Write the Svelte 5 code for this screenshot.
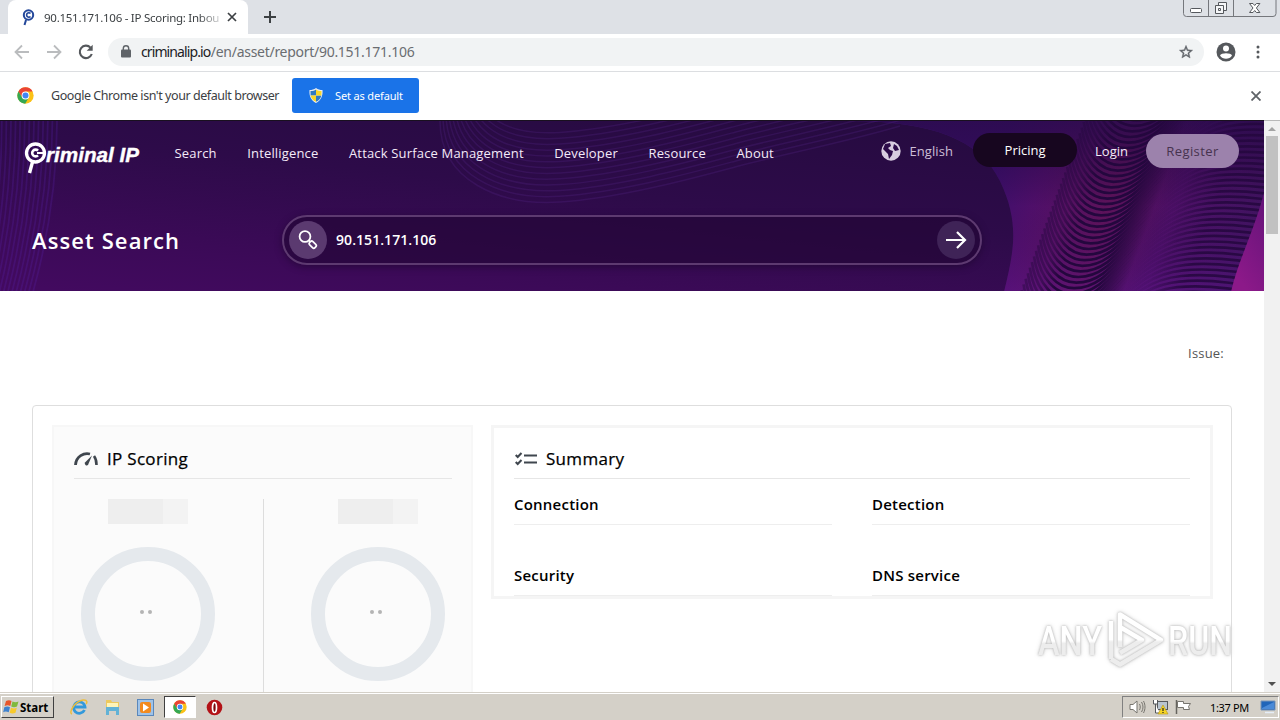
<script>
  const nav = ['Search', 'Intelligence', 'Attack Surface Management', 'Developer', 'Resource', 'About'];
  const waves = Array.from({ length: 64 }, (_, i) => {
    const y = i * 5.6 - 40;
    const x = 1100 - y * 0.37;
    return `M${x} ${y - 43}C${x + 4} ${y - 14} ${x + 20} ${y} ${x + 36} ${y}C${x + 58} ${y} ${x + 70} ${y - 14} ${x + 95} ${y - 40}C${x + 122} ${y - 68} ${x + 140} ${y - 82} ${x + 170} ${y - 85}S${x + 230} ${y - 84} ${x + 300} ${y - 70}`;
  });
  const arcs = Array.from({ length: 13 }, (_, i) => {
    const y = -i * 5.8;
    return `M${440 + i * 3} ${y}C${440 + i * 2} ${60 + y} 500 ${85 + y} 560 ${81 + y}S690 ${58 + y} 735 ${46 + y}S850 ${20 + y} 900 ${5 + y}`;
  });
  const slants = Array.from({ length: 16 }, (_, i) => `M${i * 4.6 - 12} 0C${i * 4.6 - 12} 50 ${i * 4.4 - 16} 110 ${i * 4.2 - 30} 171`);
  const groups = [['Connection', 'Detection'], ['Security', 'DNS service']];
</script>

{#snippet chrome(size)}
  <svg width={size} height={size} viewBox="0 0 48 48">
    <circle cx="24" cy="24" r="23" fill="#fbc116" />
    <path d="M4 12.5A23 23 0 0 1 44 12.5L24 13 14 29Z" fill="#ea4335" />
    <path d="M4 12.5A23 23 0 0 0 23 47L33 30H15Z" fill="#34a853" />
    <circle cx="24" cy="24" r="11" fill="#fff" />
    <circle cx="24" cy="24" r="8.5" fill="#4285f4" />
  </svg>
{/snippet}

<div class="screen">
  <div class="tabstrip">
    <div class="tab">
      <svg class="fav" width="14" height="17" viewBox="0 0 14 17" fill="none" stroke="#23479a"><circle cx="7.5" cy="6" r="4.7" stroke-width="2" /><path d="M9.5 4.6A2.2 2.2 0 1 0 9.5 7.4" stroke-width="1.6" /><path d="M5 11L3.5 16" stroke-width="2" /></svg>
      <span class="tabtitle">90.151.171.106 - IP Scoring: Inbou</span>
      <svg width="10" height="10" viewBox="0 0 10 10" stroke="#3c4043" stroke-width="1.7"><path d="M1 1l8 8M9 1L1 9" /></svg>
    </div>
    <svg class="plus" width="12" height="12" viewBox="0 0 12 12" stroke="#3c4043" stroke-width="2"><path d="M6 0v12M0 6h12" /></svg>
    <svg class="winctl" width="94" height="18" viewBox="0 0 94 18" fill="none" stroke="#75777c"><path d="M.5 0V13.500a3 3 0 0 0 3 3H90a3 3 0 0 0 3-3V0M25.500 0v16M50.500 0v16" /><rect x="7.500" y="8.500" width="11" height="4" rx="1" fill="#fff" stroke="#55585d" /><path d="M35.500 5V2.500h8v8h-3M32.500 5.500h8v8h-8zM35.500 8.500h2v2h-2z" stroke="#55585d" fill="#f5f6f8" /><path d="M66.500 3.500h3.500l1.700 2 1.700-2h3.500l-3.500 4.500 3.500 4.500h-3.500l-1.700-2-1.700 2h-3.500l3.500-4.500z" fill="#fff" stroke="#55585d" /></svg>
  </div>

  <div class="toolbar">
    <svg width="16" height="16" viewBox="0 0 16 16" fill="none" stroke="#babcbe" stroke-width="1.8"><path d="M15 8H2M8 1.500L1.500 8 8 14.500" /></svg>
    <svg width="16" height="16" viewBox="0 0 16 16" fill="none" stroke="#babcbe" stroke-width="1.8"><path d="M1 8h13M8 1.500L14.500 8 8 14.500" /></svg>
    <svg width="16" height="16" viewBox="0 0 16 16" fill="none"><path d="M13.800 10A6.200 6.200 0 1 1 12.500 3.600" stroke="#55585c" stroke-width="2.100" /><path d="M14.700.8v6H8.700z" fill="#55585c" /></svg>
    <div class="omnibox">
      <svg width="10" height="13" viewBox="0 0 10 13"><rect y="4.500" width="10" height="8" rx="1" fill="#5f6368" /><path d="M2.300 5V3.500a2.700 2.700 0 0 1 5.400 0V5" fill="none" stroke="#5f6368" stroke-width="1.400" /></svg>
      <span class="url"><b>criminalip.io</b><span class="path">/en/asset/report/90.151.171.106</span></span>
      <svg width="16" height="16" viewBox="0 0 24 24" fill="#5f6368" stroke="#5f6368" stroke-width=".6"><path d="M22 9.240l-7.190-.620L12 2 9.190 8.630 2 9.240l5.460 4.730L5.820 21 12 17.270 18.180 21l-1.630-7.030L22 9.240zM12 15.400l-3.760 2.270 1-4.280-3.320-2.880 4.380-.380L12 6.100l1.710 4.040 4.380.380-3.320 2.880 1 4.280L12 15.400z" /></svg>
    </div>
    <svg width="20" height="20" viewBox="0 0 20 20"><circle cx="10" cy="10" r="9.500" fill="#55585c" /><circle cx="10" cy="6.500" r="3" fill="#fff" /><path d="M4 13.500c1-3 11-3 12 0-2.500 4.300-9.500 4.300-12 0z" fill="#fff" /></svg>
    <svg class="dots" width="4" height="14" viewBox="0 0 4 14" fill="#55585c"><circle cx="2" cy="2" r="1.500" /><circle cx="2" cy="7" r="1.500" /><circle cx="2" cy="12" r="1.500" /></svg>
  </div>

  <div class="infobar">
    {@render chrome(17)}
    <span class="msg">Google Chrome isn't your default browser</span>
    <button><svg width="14" height="15" viewBox="0 0 14 15"><path d="M7 0c2 1.500 4 2 6.500 2 .5 6-1.500 10.500-6.500 13C2 12.500 0 8 .5 2 3 2 5 1.500 7 0z" fill="#e9edf2" /><path d="M7 1.500V7.500H1.600L1.500 3C4 3 5.500 2.500 7 1.500zM7 7.500h5.300C11.800 10.500 10 12.500 7 13.800z" fill="#2f79c4" /><path d="M7 1.500C8.500 2.500 10 3 12.500 3l-.1 4.500H7zM7 7.500H1.600C2.200 10.500 4 12.500 7 13.800z" fill="#f8d62a" /></svg>Set as default</button>
    <svg class="close" width="10" height="10" viewBox="0 0 10 10" stroke="#5f6368" stroke-width="1.800"><path d="M.5.5l9 9M9.500.5l-9 9" /></svg>
  </div>

  <div class="view">
    <div class="page">
      <section class="hero">
        <svg class="art" width="1264" height="171" viewBox="0 0 1264 171" fill="none">
          <defs>
            <linearGradient id="base" x1="0" y1="1" x2=".75" y2="0"><stop offset="0" stop-color="#430a60" /><stop offset=".25" stop-color="#3b0a57" /><stop offset=".6" stop-color="#2d0b49" /><stop offset="1" stop-color="#260b40" /></linearGradient>
            <linearGradient id="side" gradientUnits="userSpaceOnUse" x1="990" y1="60" x2="1240" y2="150"><stop offset="0" stop-color="#3f1075" /><stop offset=".18" stop-color="#541070" /><stop offset=".45" stop-color="#66145f" /><stop offset=".68" stop-color="#54116f" /><stop offset="1" stop-color="#451566" /></linearGradient>
            <linearGradient id="shade" x1="0" y1="0" x2="0" y2="1"><stop offset="0" stop-color="#2a0b4c" stop-opacity=".85" /><stop offset=".5" stop-color="#240739" stop-opacity=".12" /><stop offset="1" stop-color="#5b138a" stop-opacity=".4" /></linearGradient>
            <linearGradient id="mag" x1="1" y1="0" x2=".5" y2="1"><stop offset="0" stop-color="#641379" /><stop offset="1" stop-color="#8c1989" /></linearGradient>
            <linearGradient id="line" gradientUnits="userSpaceOnUse" x1="1070" y1="80" x2="1230" y2="139"><stop offset="0" stop-color="#24073e" stop-opacity=".45" /><stop offset=".09" stop-color="#24073e" /><stop offset=".33" stop-color="#24073e" /><stop offset=".48" stop-color="#24073e" stop-opacity=".08" /><stop offset=".6" stop-color="#24073e" stop-opacity=".15" /><stop offset=".8" stop-color="#24073e" stop-opacity=".85" /></linearGradient>
          </defs>
          <rect width="1264" height="171" fill="url(#base)" />
          <path d="M850 0C930 0 980 18 1000 60S1014 130 1004 171H1264V0z" fill="url(#side)" />
          <path d="M850 0C930 0 980 18 1000 60S1014 130 1004 171H1264V0z" fill="url(#shade)" />
          <g stroke="url(#line)" stroke-width="2.700">{#each waves as d}<path {d} />{/each}</g>
          <path d="M1264 72C1254 110 1238 140 1231 171H1264z" fill="url(#mag)" />
          <g stroke="#5a2a92" stroke-opacity=".24" stroke-width="1.500">{#each arcs as d}<path {d} />{/each}</g>
          <g stroke="#5722a5" stroke-opacity=".28" stroke-width="1.800">{#each slants as d}<path {d} />{/each}</g>
        </svg>
        <header>
          <svg class="logo" width="116" height="34" viewBox="0 0 116 34" fill="none" stroke="#fff">
            <circle cx="11.500" cy="12" r="9" stroke-width="3.300" /><path d="M14 9.600A3.400 3.400 0 1 0 14 14.400" stroke-width="2.600" /><path d="M13 12h8" stroke-width="2" /><path d="M8.500 21L5.500 32" stroke-width="3.400" />
            <text x="22" y="21" textLength="93" lengthAdjust="spacingAndGlyphs" fill="#fff" stroke-width=".4">riminal IP</text>
          </svg>
          <nav>{#each nav as n}<span>{n}</span>{/each}</nav>
          <div class="lang"><svg width="20" height="20" viewBox="0 0 20 20"><circle cx="10" cy="10" r="9.700" fill="#d8cde0" /><path d="M4 3l5-1 1 3-3 2 2 2 3 1-1 4-3 4-1-5-3-3-2-2zM13 3l3 2 2 4-4 1-2-3z" fill="#2c0b49" /></svg>English</div>
          <span class="pill pricing">Pricing</span>
          <span class="login">Login</span>
          <span class="pill register">Register</span>
        </header>
        <div class="searchrow">
          <h1>Asset Search</h1>
          <div class="searchbox">
            <span class="disc"><svg width="22" height="22" viewBox="0 0 22 22" fill="none" stroke="#fff"><circle cx="8" cy="7.500" r="5.400" stroke-width="1.800" /><path d="M11.800 11.300l1.500 1.500" stroke-width="1.800" /><rect x="12" y="13.300" width="7.500" height="4.600" rx="1.800" transform="rotate(45 15.700 15.600)" stroke-width="1.700" /></svg></span>
            <b>90.151.171.106</b>
            <span class="disc go"><svg width="22" height="18" viewBox="0 0 22 18" fill="none" stroke="#fff" stroke-width="2.200"><path d="M1 9h19M12 1l8 8-8 8" /></svg></span>
          </div>
        </div>
      </section>

      <div class="issue">Issue:</div>

      <main>
        <section class="scoring">
          <h2><svg width="24" height="14" viewBox="0 0 24 14" fill="none" stroke="#3f464e"><path d="M1.500 13C2 4 10 .5 16 2" stroke-width="2.800" /><path d="M20 4c1.500 2 2.500 4.500 2.500 9" stroke-width="2.600" /><path d="M18 3.500L11 10.500a2 2 0 0 0 3 2.500z" fill="#3f464e" stroke="none" /></svg><span>IP Scoring</span></h2>
          <div class="gauges">
            {#each [0, 1] as g (g)}
              <div class="gauge"><i></i><div class="ring"><span></span><span></span></div></div>
            {/each}
          </div>
        </section>
        <section class="summary">
          <h2><svg width="22" height="14" viewBox="0 0 22 14" fill="none" stroke="#3f464e" stroke-width="2"><path d="M.7 3l2 2L6.500 1M.7 10l2 2 3.800-4M9 3.500h13M9 10.500h13" /></svg><span>Summary</span></h2>
          <div class="grid">
            {#each groups as row}{#each row as g}<h3>{g}</h3>{/each}{/each}
          </div>
        </section>
      </main>
      <svg class="mark" width="212" height="70" viewBox="0 0 212 70">
        <defs><linearGradient id="fade" x1="0" y1="0" x2="0" y2="1"><stop offset=".5" stop-color="#fff" /><stop offset=".55" stop-color="#ededed" /></linearGradient></defs>
        <g fill="url(#fade)"><text x="7" y="50" textLength="64" lengthAdjust="spacingAndGlyphs">ANY</text><text x="137" y="50" textLength="64" lengthAdjust="spacingAndGlyphs">RUN</text></g>
        <path d="M80 54V16M89 42V9.500L130 35 89 59.500 80 54M89 22l22 13-22 13" fill="none" stroke="url(#fade)" stroke-width="4.500" stroke-linejoin="round" />
      </svg>
    </div>
    <div class="scroll"><i class="up"></i><div class="thumb"></div><i class="down"></i></div>
  </div>

  <div class="taskbar">
    <div class="start"><svg width="17" height="16" viewBox="0 0 17 16"><path d="M3 2c2-1 4-1 5.500 0L7.300 7C5.500 6 4 6 1.600 7z" fill="#e8562a" /><path d="M9.500 2.500c2 1 4 1 6 0L14 7.500c-2 1-4 1-5.800 0z" fill="#80b93c" /><path d="M1.300 8.200c2-1 4-1 5.700 0l-1.300 5c-2-1-4-1-5.500 0z" fill="#3e82cf" /><path d="M8 8.700c2 1 4 1 5.800 0l-1.300 5c-2 1-4 1-5.800 0z" fill="#f8ca2c" /></svg>Start</div>
    <div class="apps">
      <svg width="18" height="18" viewBox="0 0 18 18" fill="none"><path d="M14.500 12A5.700 5.700 0 1 1 15 9H5" stroke="#3299db" stroke-width="2.800" /><path d="M2 16C-2 15 5 3 13 2c5-.5 4 3 3 4" stroke="#edbd3b" stroke-width="1.500" /></svg>
      <svg width="17" height="17" viewBox="0 0 17 17"><path d="M2 1h5l1 2h7v9H2z" fill="#edc95e" /><path d="M3 4h11v4H3z" fill="#fff4b8" /><path d="M2 8h13v8h-3v-4H5v4H2z" fill="#62b2d6" /></svg>
      <svg width="17" height="17" viewBox="0 0 17 17"><rect x=".5" y=".5" width="16" height="16" fill="#9fc3e8" stroke="#5a87bb" /><rect x="3" y="3" width="11" height="11" rx="2" fill="#f28a1e" /><path d="M6 4.500v8l6-4z" fill="#fff" /></svg>
      <span class="active">{@render chrome(14)}</span>
      <svg width="17" height="17" viewBox="0 0 17 17"><circle cx="8.500" cy="8.500" r="7.800" fill="#b31217" /><ellipse cx="8.500" cy="8.500" rx="2" ry="5" fill="#7c080c" stroke="#fff" stroke-width="1.700" /></svg>
    </div>
    <div class="tray">
      <svg width="17" height="16" viewBox="0 0 17 16" fill="none" stroke="#77756f"><path d="M1 5.500h3L8 2v12L4 10.500H1z" fill="#fff" /><path d="M10.500 5c1 2 1 4 0 6M12.500 3c2 3 2 7 0 10M14.500 2c2 4 2 8 0 12" /></svg>
      <svg width="17" height="16" viewBox="0 0 17 16"><rect x="5.500" y="2.500" width="10" height="8" fill="#b9c4cf" stroke="#55585c" /><path d="M1.500 1v4h4V1M3.500 5v9h4" fill="#fff" stroke="#55585c" /><path d="M11 6l5 9H6z" fill="#f6d523" stroke="#b69514" stroke-width=".6" /><path d="M11 9v3M11 13v1" stroke="#222" stroke-width="1.200" /></svg>
      <svg width="17" height="16" viewBox="0 0 17 16"><path d="M1.500 1v14" stroke="#66645f" stroke-width="1.500" /><path d="M2.500 2.500h6v2h7l-2 3 1 3h-6v-2h-6z" fill="#fff" stroke="#77756f" /></svg>
      <span class="time">1:37 PM</span>
      <svg width="16" height="14" viewBox="0 0 16 14"><path d="M1 1h14v9H1z" fill="#2165b9" stroke="#7b95b7" /><path d="M2 8L14 2v7H2z" fill="#4b8ad7" /><path d="M5 12.500h9" stroke="#e5edf7" stroke-width="1.500" /></svg>
    </div>
  </div>
</div>

<style>
  :global(body) { margin: 0; overflow: hidden; }
  .screen { width: 1280px; height: 720px; display: flex; flex-direction: column; overflow: hidden; background: #fff; font-family: "Noto Sans", sans-serif; box-sizing: border-box; }
  .screen :global(*) { box-sizing: border-box; }
  svg { flex: none; display: block; }
  span { white-space: nowrap; }
  .tabstrip { height: 34px; flex: none; background: #dee1e6; display: flex; align-items: flex-start; padding-left: 8px; }
  .tab { height: 34px; width: 240px; background: #fff; border-radius: 8px 8px 0 0; display: flex; align-items: center; padding-left: 13px; }
  .tabtitle { width: 176px; margin: 0 7px 0 9px; font-size: 11.500px; letter-spacing: -.26px; color: #3c4043; -webkit-mask: linear-gradient(90deg, #000 88%, #0003); mask: linear-gradient(90deg, #000 88%, #0003); }
  .plus { margin: 11px 0 0 16px; }
  .winctl { margin: 0 3px 0 auto; }
  .toolbar { height: 38px; flex: none; border-bottom: 1px solid #dcdee1; display: flex; align-items: center; padding: 0 20px 2px 14px; gap: 16px; }
  .omnibox { flex: 1; height: 28px; margin: 0 -4px 0 -2px; border-radius: 14px; background: #f1f3f4; display: flex; align-items: center; padding: 0 10px 0 13px; }
  .url { flex: 1; margin-left: 10px; font-size: 14px; color: #6a6d71; }
  .url b { font-weight: 400; letter-spacing: -.9px; margin-right: .5px; color: #202124; }
  .path { letter-spacing: -.28px; }
  .dots { margin-left: 4px; }
  .infobar { height: 48px; flex: none; display: flex; align-items: center; padding: 0 19px 1px 17px; color: #3c4043; font-size: 12.500px; letter-spacing: -.44px; }
  .msg { width: 241px; margin-left: 17px; }
  button { width: 127px; height: 35px; border: 0; border-radius: 3px; background: #1a73e8; color: #fff; font: 11px "Noto Sans", sans-serif; letter-spacing: -.15px; white-space: nowrap; display: flex; align-items: center; gap: 12px; padding: 0 0 1px 17px; }
  .close { margin-left: auto; }
  .view { flex: 1; min-height: 0; display: flex; }
  .page { width: 1264px; position: relative; overflow: hidden; font-family: "Open Sans", sans-serif; }
  .hero { height: 171px; position: relative; border-top: 1px solid #19101f; color: #f4eaf8; font-size: 13px; overflow: hidden; }
  .art { position: absolute; left: 0; top: 0; }
  header { position: relative; height: 60px; display: flex; align-items: center; padding: 0 25px 0 24px; }
  .logo { margin-top: 14px; }
  .logo text { font: italic 700 21px "Liberation Sans", sans-serif; }
  nav { display: flex; gap: 30.500px; margin: 4px auto 0 34.500px; letter-spacing: .17px; }
  .lang { display: flex; align-items: center; gap: 8px; letter-spacing: .1px; color: #cdbfd7; }
  .pill { height: 34px; border-radius: 17px; display: flex; align-items: center; justify-content: center; }
  .pricing { width: 104px; margin: -2px 18px 0 20px; background: #17061f; color: #fff; }
  .login { margin-right: 18px; }
  .register { width: 93px; background: #9c82ac; color: #47334f; letter-spacing: .4px; }
  .searchrow { position: relative; display: flex; align-items: center; height: 50px; margin-top: 34px; padding-left: 32px; }
  h1 { width: 250px; margin: 0; font-size: 22px; font-weight: 600; letter-spacing: 1.100px; color: #fff; }
  .searchbox { width: 700px; height: 50px; border: 2px solid #5d3a70; border-radius: 25px; background: #21053399; display: flex; align-items: center; padding: 0 5px; box-shadow: 0 2px 7px #1905288a; }
  .disc { width: 38px; height: 38px; border-radius: 50%; background: #5b3a70; display: flex; align-items: center; justify-content: center; }
  .searchbox b { flex: 1; margin-left: 9px; padding-bottom: 1px; font-size: 14px; font-weight: 600; letter-spacing: .06px; color: #fff; }
  .go { background: #3f2357; }
  .issue { height: 114px; padding: 53px 40px 0; text-align: right; font-size: 13px; letter-spacing: .2px; color: #555; }
  main { width: 1200px; height: 400px; margin-left: 32px; border: 1px solid #dedede; border-radius: 4px; padding: 19px 19px 0; display: flex; gap: 18px; align-items: flex-start; }
  .scoring { width: 421px; height: 380px; background: #fbfbfb; border: 2px solid #f7f7f7; padding: 0 19px 0 20px; }
  .summary { width: 722px; height: 174px; border: 3px solid #f5f5f5; padding: 0 20px; }
  h2 { margin: 0; height: 52px; padding-top: 12px; border-bottom: 1px solid #e6e6e6; display: flex; align-items: center; gap: 9px; font-size: 17px; font-weight: 500; letter-spacing: .3px; color: #000; -webkit-text-stroke: .25px #000; }
  .summary h2 { height: 51px; padding: 11px 0 0 1px; }
  .gauges { display: flex; margin-top: 20px; }
  .gauge { width: 189px; height: 300px; padding-left: 7px; }
  .gauge + .gauge { border-left: 1px solid #ddd; padding-left: 47px; }
  .gauge i { display: block; width: 80px; height: 25px; margin: 0 0 23px 27px; background: linear-gradient(90deg, #eee 0 69%, #f3f3f3 69%); }
  .ring { width: 134px; height: 134px; border-radius: 50%; border: 14px solid #e5e9ed; display: flex; justify-content: center; gap: 4px; padding: 49px 4px 0 0; }
  .ring span { width: 4px; height: 4px; border-radius: 2px; background: #b4b4b4; }
  .grid { display: grid; grid-template-columns: 318px 318px; column-gap: 40px; row-gap: 25px; }
  h3 { margin: 0; height: 46px; padding-top: 14px; border-bottom: 1px solid #eee; font-size: 15px; line-height: 22px; font-weight: 600; letter-spacing: .22px; color: #000; }
  .mark { position: absolute; left: 1031px; top: 485px; filter: drop-shadow(0 0 1px #b4b4b4) drop-shadow(0 0 2px #ddd); }
  .mark text { font: 500 41px Roboto, sans-serif; }
  .scroll { width: 16px; background: #f1f1f1; border-top: 1px solid #b9b9b9; display: flex; flex-direction: column; align-items: center; }
  .up { margin-top: 6px; border: 4px solid transparent; border-top: 0; border-bottom-color: #a3a3a3; }
  .thumb { width: 12px; height: 98px; margin-top: 5px; background: #c1c1c1; }
  .down { margin: auto 0 6px; border: 4px solid transparent; border-bottom: 0; border-top-color: #505050; }
  .taskbar { height: 28px; flex: none; border-top: 1px solid #d4d0c8; box-shadow: inset 0 1px #fff; background: #d4d0c8; display: flex; align-items: center; padding: 1px 1px 0; }
  .start { width: 53px; height: 22px; border: 1px solid #fff; border-right-color: #404040; border-bottom-color: #404040; display: flex; align-items: center; padding-left: 1px; font-size: 11.500px; font-weight: 700; color: #000; }
  .apps { display: flex; align-items: center; margin-left: 16px; gap: 16px; }
  .active { width: 32px; height: 22px; margin: 0 -6px; border: 1px solid #404040; border-right-color: #fff; border-bottom-color: #fff; background: #fff; display: flex; align-items: center; justify-content: center; }
  .tray { width: 157px; height: 22px; margin-left: auto; border: 1px solid #808080; border-right-color: #fff; border-bottom-color: #fff; display: flex; align-items: center; padding-left: 6px; gap: 6px; font-size: 11px; letter-spacing: -.35px; color: #000; }
  .time { width: 44px; margin-left: 12px; }
</style>
